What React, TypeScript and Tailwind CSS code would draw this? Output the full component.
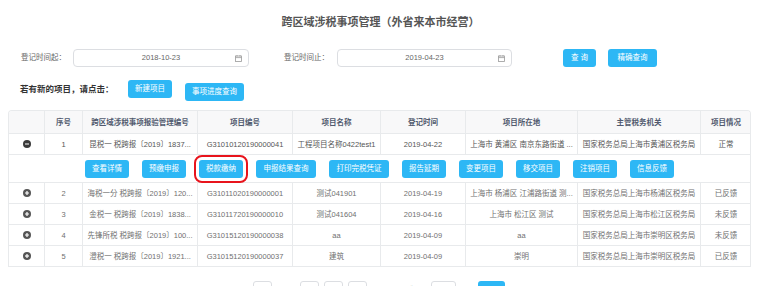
import { Fragment } from "react"

const font = { fontFamily: '"Liberation Sans", "Noto Sans CJK SC", sans-serif' }

const cols = "grid grid-cols-[36px_38px_115px_95px_88px_85px_112px_123px_50px]"

const heads = ["", "序号", "跨区域涉税事项报验管理编号", "项目编号", "项目名称", "登记时间", "项目所在地", "主管税务机关", "项目情况"]

const rows = [
  ["1", "昆税一 税跨报〔2019〕1837...", "G31010120190000041", "工程项目名称0422test1", "2019-04-22", "上海市 黄浦区 南京东路街道 ...", "国家税务总局上海市黄浦区税务局", "正常"],
  ["2", "海税一分 税跨报〔2019〕120...", "G31011020190000001", "测试041901", "2019-04-19", "上海市 杨浦区 江浦路街道 测...", "国家税务总局上海市杨浦区税务局", "已反馈"],
  ["3", "金税一 税跨报〔2019〕1838...", "G31011720190000010", "测试041604", "2019-04-16", "上海市 松江区 测试", "国家税务总局上海市松江区税务局", "未反馈"],
  ["4", "先锋所税 税跨报〔2019〕100...", "G31015120190000038", "aa", "2019-04-09", "aa", "国家税务总局上海市崇明区税务局", "未反馈"],
  ["5", "澄税一 税跨报〔2019〕1921...", "G31015120190000037", "建筑", "2019-04-09", "崇明", "国家税务总局上海市崇明区税务局", "已反馈"],
]

const actions = ["查看详情", "预缴申报", "税款缴纳", "申报结果查询", "打印完税凭证", "报告延期", "变更项目", "移交项目", "注销项目", "信息反馈"]

function Btn({ label, w, marked }: { label: string; w?: string; marked?: boolean }) {
  return (
    <button
      className={
        "h-[18px] shrink-0 rounded-[3px] bg-[#2db7f5] px-[7px] text-[7.5px] leading-[18px] text-white " +
        (w ? w + " " : "") +
        (marked ? "outline-2 outline-solid outline-[#e8141c] outline-offset-[3px]" : "")
      }
    >
      {label}
    </button>
  )
}

function DateBox({ value, w }: { value: string; w: string }) {
  return (
    <div className={"relative flex h-[18px] items-center justify-center rounded-[4px] border border-[#dcdee2] bg-white text-[7.5px] text-[#666] " + w}>
      {value}
      <svg className="absolute right-[6px] top-[5px]" width="7" height="7" viewBox="0 0 7 7">
        <rect x="0.5" y="1" width="6" height="5.5" fill="none" stroke="#999" strokeWidth="0.8" />
        <line x1="0.5" y1="2.6" x2="6.5" y2="2.6" stroke="#999" strokeWidth="0.8" />
        <line x1="2" y1="0" x2="2" y2="1.5" stroke="#999" strokeWidth="0.8" />
        <line x1="5" y1="0" x2="5" y2="1.5" stroke="#999" strokeWidth="0.8" />
      </svg>
    </div>
  )
}

function Toggle({ open }: { open: boolean }) {
  return (
    <svg width="8" height="8" viewBox="0 0 8 8">
      <circle cx="4" cy="4" r="4" fill={open ? "#3a3a3a" : "#555"} />
      <line x1="2" y1="4" x2="6" y2="4" stroke="#fff" strokeWidth="1.2" />
      {!open && <line x1="4" y1="2" x2="4" y2="6" stroke="#fff" strokeWidth="1.2" />}
    </svg>
  )
}

function Row({ r, open }: { r: string[]; open: boolean }) {
  return (
    <div className={cols + " h-[21px] border-b border-[#e8eaec] text-[7.5px] " + (open ? "text-[#555]" : "text-[#707070]")}>
      <div className="flex items-center justify-center border-r border-[#e8eaec]">
        <Toggle open={open} />
      </div>
      {r.map((c, i) => (
        <div
          key={i}
          className={"truncate px-[2px] text-center leading-[21px] " + (i < r.length - 1 ? "border-r border-[#e8eaec]" : "")}
        >
          {c}
        </div>
      ))}
    </div>
  )
}

export default function App() {
  return (
    <div className="h-[286px] w-[761px] overflow-hidden bg-white" style={font}>
      <h1 className="pt-[15px] text-center text-[11px] font-bold leading-[14px] text-[#555]">
        跨区域涉税事项管理（外省来本市经营）
      </h1>

      <div className="mt-[20px] flex h-[18px] items-center pl-[21px] text-[7.5px] text-[#666]">
        <span className="w-[52px]">登记时间起：</span>
        <DateBox value="2018-10-23" w="w-[176px]" />
        <span className="ml-[35px] w-[53px]">登记时间止：</span>
        <DateBox value="2019-04-23" w="w-[175px]" />
        <div className="ml-[51px]">
          <Btn label="查 询" w="w-[33px]" />
        </div>
        <div className="ml-[12px]">
          <Btn label="精确查询" w="w-[49px]" />
        </div>
      </div>

      <div className="mt-[13px] flex h-[18px] items-center pl-[20px]">
        <span className="w-[108px] text-[8.5px] font-bold text-[#333]">若有新的项目，请点击：</span>
        <Btn label="新建项目" w="w-[44px]" />
        <div className="ml-[13px]">
          <Btn label="事项进度查询" w="w-[59px]" />
        </div>
      </div>

      <div className="ml-[8px] mt-[12px] w-[743px] overflow-hidden rounded-t-[4px] border border-b-0 border-[#e8eaec]">
        <div className={cols + " h-[23px] border-b border-[#e8eaec] bg-[#f8f8f9] text-[7.5px] font-semibold text-[#515a6e]"}>
          {heads.map((h, i) => (
            <div key={i} className={"truncate text-center leading-[23px] " + (i < heads.length - 1 ? "border-r border-[#e8eaec]" : "")}>
              {h}
            </div>
          ))}
        </div>
        {rows.map((r, i) => (
          <Fragment key={i}>
            <Row r={r} open={i === 0} />
            {i === 0 && (
              <div className="flex h-[28px] items-center justify-center gap-[13px] border-b border-[#e8eaec]">
                {actions.map((a) => (
                  <Btn key={a} label={a} w={a.length > 4 ? "w-[60px]" : "w-[44px]"} marked={a === "税款缴纳"} />
                ))}
              </div>
            )}
          </Fragment>
        ))}
      </div>

      <div className="mt-[14px] flex items-start text-[7.5px] text-[#666]">
        <div className="ml-[253px] h-[19px] w-[19px] rounded-[3px] border border-[#dcdee2]" />
        <div className="ml-[28px] h-[19px] w-[19px] rounded-[3px] border border-[#dcdee2]" />
        <div className="ml-[5px] h-[19px] w-[19px] rounded-[3px] border border-[#dcdee2]" />
        <div className="ml-[5px] h-[19px] w-[19px] rounded-[3px] border border-[#dcdee2]" />
        <span className="ml-[14px] leading-[19px]">共 1 页 跳至</span>
        <div className="ml-[10px] h-[19px] w-[25px] rounded-[3px] border border-[#dcdee2]" />
        <span className="ml-[6px] leading-[19px]">页</span>
        <div className="ml-[8px] h-[19px] w-[27px] rounded-[3px] bg-[#2db7f5]" />
      </div>
    </div>
  )
}
